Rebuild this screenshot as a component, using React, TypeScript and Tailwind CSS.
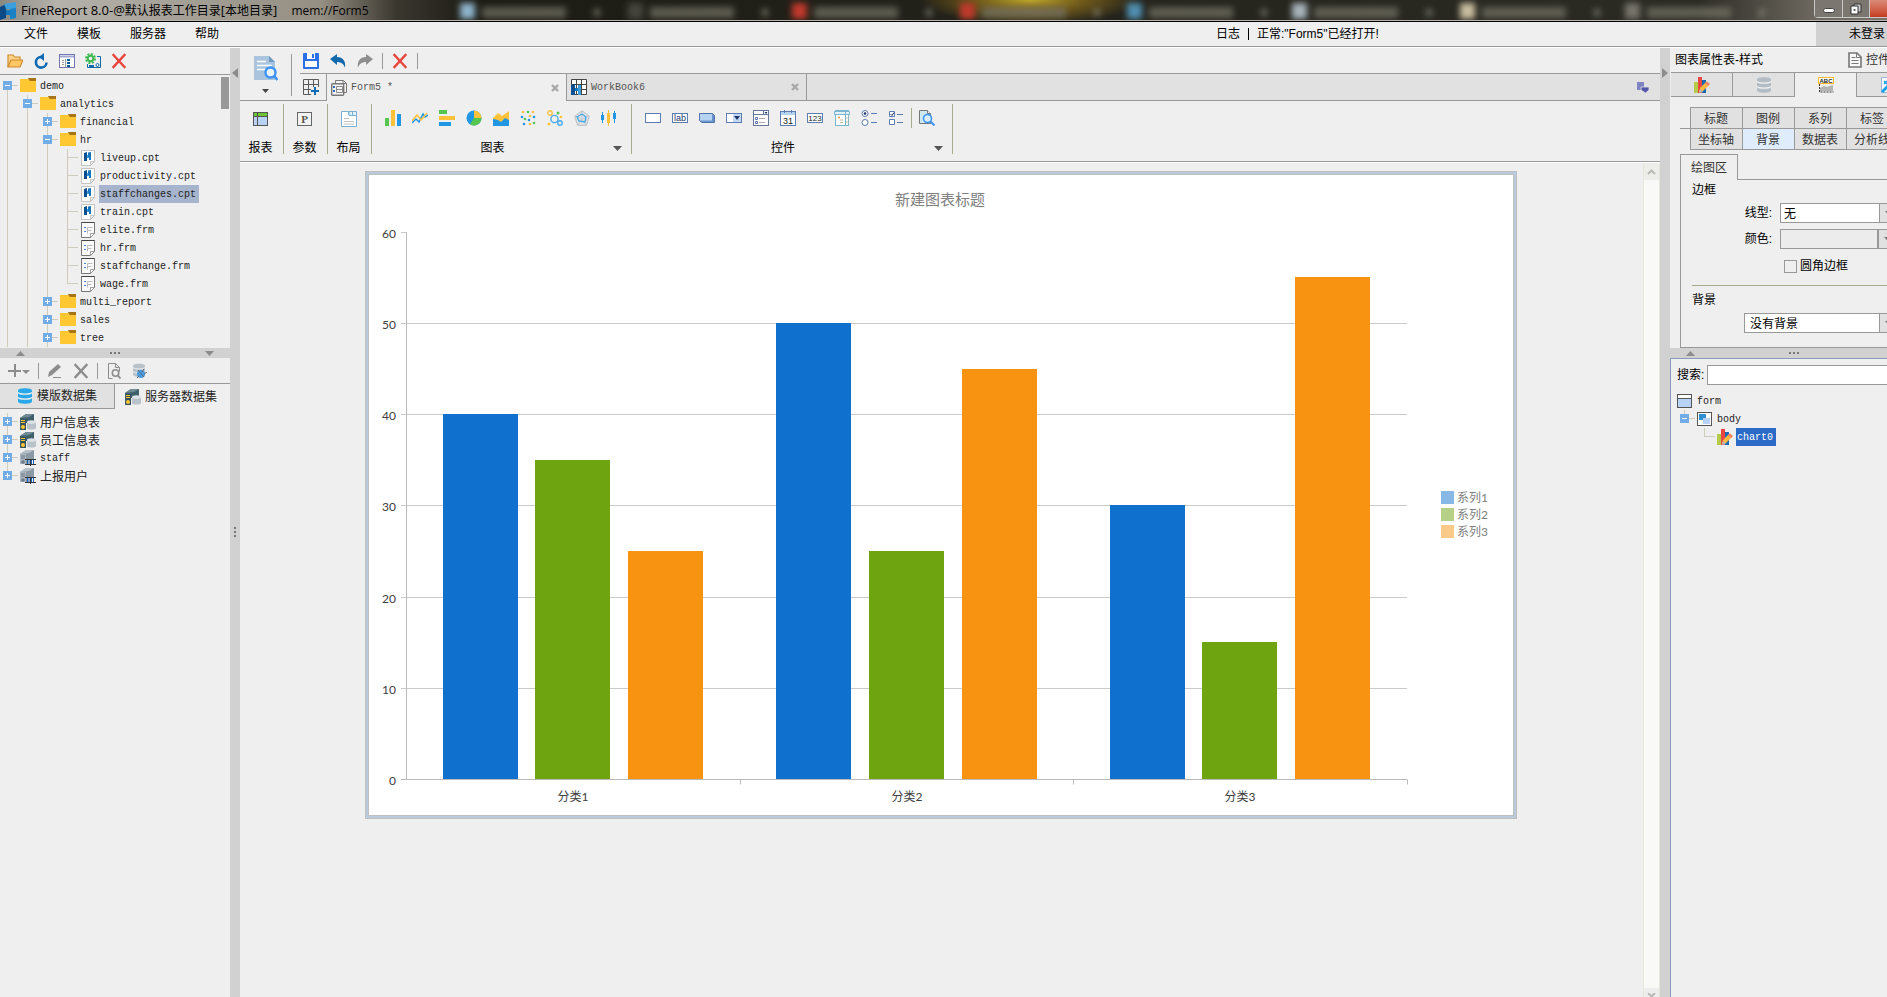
import { useState } from 'react';
import type { ReactNode } from 'react';

type Cell = 'line' | 'plus' | 'minus' | 'first' | 'last-plus' | 'last-minus' | 'branch' | 'end' | 'blank';

interface TreeItem {
  cells: Cell[];
  icon: ReactNode;
  label: string;
  cjk?: boolean;
}

function Icon({ children, w = 16, h = 16 }: { children: ReactNode; w?: number; h?: number }) {
  return (
    <svg width={w} height={h} viewBox={`0 0 ${w} ${h}`} className="shrink-0" aria-hidden="true">
      {children}
    </svg>
  );
}

/* ---------- tree icons ---------- */

const FolderIcon = () => (
  <Icon>
    <path d="M8 0h8v3H9z" fill="#a87418" />
    <path d="M0 1h8l2 2h6v11H0z" fill="#ffc833" />
  </Icon>
);

const CptIcon = () => (
  <Icon>
    <path d="M1.500 .5h13v11l-4 4h-9z" fill="#fff" stroke="#c4c4c4" />
    <path d="M10.500 15.500v-4h4z" fill="#e8e8e8" stroke="#bbb" strokeWidth=".8" />
    <path d="M4 3l3-1v9H4z" fill="#0a4f8f" />
    <path d="M7 5h2v3H7z" fill="#3ba0dd" />
    <path d="M8 2.500L11 2v8H9V7H8z" fill="#1577bd" />
  </Icon>
);

const FrmIcon = () => (
  <Icon>
    <path d="M1.500 .5h13v11l-4 4h-9z" fill="#fafafa" stroke="#777" />
    <path d="M1.500 .5h13" stroke="#444" />
    <path d="M10.500 15.500v-4h4z" fill="#fff" stroke="#888" strokeWidth=".8" />
    <path d="M4 5.500h2M4 9.500h2" stroke="#4a80d8" strokeWidth="1.200" />
    <path d="M7.500 11.500v-6h5M7.500 8.500h4" stroke="#bbb" fill="none" />
  </Icon>
);

const ServerIcon = () => (
  <Icon>
    <path d="M0 4l6-4h8v9H6v7H0z" fill="#3f5f6b" />
    <path d="M0 4l6-4h8l-5 3z" fill="#6f8c95" />
    <path d="M1 5h5v11H1z" fill="#35505b" />
    <path d="M1 6h4v1H1zM1 8h4v1H1z" fill="#ffc833" />
    <circle cx="3" cy="13" r="2" fill="#ffc833" />
    <path d="M7 8v6c0 2 9 2 9 0V8z" fill="#b9c1c9" />
    <ellipse cx="11.500" cy="8" rx="4.500" ry="1.800" fill="#dde2e7" />
  </Icon>
);

const ProcIcon = () => (
  <Icon>
    <path d="M0 4l6-4h8v14H0z" fill="#8b99a4" />
    <path d="M0 4l6-4h8l-5 3z" fill="#b8c2ca" />
    <path d="M0 4h6v10H0z" fill="#a9b5be" />
    <path d="M1 6h4M1 8h4" stroke="#6d7a85" />
    <circle cx="3" cy="12" r="1.800" fill="#6d7a85" />
    <path d="M7 10h7v5H7z" fill="#1a63b5" />
    <path d="M5 9.500h11M5 14.500h11M10.500 9v7" stroke="#333" />
    <path d="M9 10v4M12.500 10v4" stroke="#efefef" />
  </Icon>
);

const ChartPenIcon = () => (
  <Icon>
    <path d="M0 5h4v11H0z" fill="#b4cc4a" />
    <path d="M4 0h4v16H4z" fill="#ea4540" />
    <path d="M8 3h4v13H8z" fill="#1a68b0" />
    <path d="M5 15l1-4 6-6 3 3-6 6z" fill="#ffb942" />
    <path d="M11 6l2-1.500 3 2.500-2 2z" fill="#f08060" />
    <path d="M5 16l1-4 3 3z" fill="#b8b8b8" />
  </Icon>
);

const DbIcon = ({ fill }: { fill: string }) => (
  <Icon>
    <path d="M1 2.500C1-.5 15-.5 15 2.500v11c0 3-14 3-14 0z" fill={fill} />
    <path d="M1 4.500c2 2.200 12 2.200 14 0M1 9.500c2 2.200 12 2.200 14 0" stroke="#efefef" strokeWidth="1.200" fill="none" />
  </Icon>
);

/* ---------- toolbar icons ---------- */

const OpenIcon = () => (
  <Icon>
    <path d="M1 14V2h5l1.500 2H13v3" fill="#ffd48a" stroke="#d08a2c" strokeWidth="1.200" />
    <path d="M1 14l3-7h12l-3 7z" fill="#ffc766" stroke="#d08a2c" strokeWidth="1.200" />
  </Icon>
);

const RefreshIcon = () => (
  <Icon>
    <path d="M13.500 9.500A5.300 5.300 0 1 1 8 4" fill="none" stroke="#0d6ab4" strokeWidth="2.600" />
    <path d="M6 4L11 0v8z" fill="#0d6ab4" />
  </Icon>
);

const PanelIcon = () => (
  <Icon>
    <rect x=".5" y="1.500" width="15" height="13" fill="#fff" stroke="#7476b4" />
    <path d="M1 3.500h14" stroke="#a5a7d0" strokeWidth="2" />
    <path d="M3 7.500h2M3 9.500h2M3 11.500h2M6.500 6v8" stroke="#9a9a9a" />
    <path d="M8 6h3v2H8zM8 9h3v2H8zM8 12h3v2H8z" fill="#0d5c9c" />
  </Icon>
);

const GearPanelIcon = () => (
  <Icon>
    <path d="M12 3.500h3.500v11H2.500V11" fill="none" stroke="#0d6aa8" />
    <circle cx="5.500" cy="5.500" r="4.500" fill="none" stroke="#3fb950" strokeWidth="2" strokeDasharray="2 1.500" />
    <circle cx="5.500" cy="5.500" r="2.800" fill="none" stroke="#3fb950" strokeWidth="2" />
    <path d="M4 13h5" stroke="#0d6aa8" strokeWidth="2" />
    <circle cx="12.500" cy="12" r="1.500" fill="#fff" stroke="#0d6aa8" />
  </Icon>
);

const CrossIcon = ({ color }: { color: string }) => (
  <Icon>
    <path d="M2.500 2l11 12M13.500 2l-11 12" stroke={color} strokeWidth="2.400" strokeLinecap="square" />
  </Icon>
);

const SmallCross = () => (
  <Icon w={8} h={8}>
    <path d="M1 1l6 6M7 1L1 7" stroke="#a8a8a8" strokeWidth="2.400" />
  </Icon>
);

const Triangle = ({ color = '#555' }: { color?: string }) => (
  <Icon w={9} h={5}>
    <path d="M0 0h9L4.500 5z" fill={color} />
  </Icon>
);

const TriangleUp = () => (
  <Icon w={9} h={5}>
    <path d="M0 5h9L4.500 0z" fill="#8c8c8c" />
  </Icon>
);

const SaveIcon = () => (
  <Icon>
    <rect width="16" height="16" rx="1" fill="#2b6fe8" />
    <path d="M2 8h12v6H2z" fill="#fff" />
    <path d="M4 0h8v6H4z" fill="#fff" />
    <path d="M9 1h2v4H9z" fill="#2b6fe8" />
  </Icon>
);

const UndoIcon = () => (
  <Icon>
    <path d="M0 6l7-5v3c6 0 9 4 8 11-1-4-4-6-8-6v3z" fill="#0f69ac" />
  </Icon>
);

const RedoIcon = () => (
  <Icon>
    <path d="M16 6L9 1v3C3 4 0 8 1 15c1-4 4-6 8-6v3z" fill="#8e8e8e" />
  </Icon>
);

const PreviewIcon = () => (
  <Icon w={24} h={25}>
    <path d="M0 0h15l6 6v18H0z" fill="#a9c4dc" />
    <path d="M15 0v6h6z" fill="#6f9cc0" />
    <path d="M3 5.500h9M3 9.500h15M3 13.500h8" stroke="#fff" strokeWidth="1.400" />
    <circle cx="16.500" cy="16.500" r="5" fill="#eaf4ff" stroke="#3b94f5" strokeWidth="2.400" />
    <path d="M20 20l3.500 4" stroke="#3b94f5" strokeWidth="2.600" />
  </Icon>
);

const AddSheetIcon = () => (
  <Icon>
    <path d="M.5 .5h15v15H.5zM.5 5.500h15M.5 10.500h15M5.500 .5v15M10.500 .5v15" fill="none" stroke="#5a5a5a" />
    <path d="M8 8h8v8H8z" fill="#efefef" />
    <path d="M12 8v8M8 12h8" stroke="#0d6ab4" strokeWidth="2" />
  </Icon>
);

const FormTabIcon = () => (
  <Icon>
    <path d="M4.500 3V.5h8l3 3v9h-3" fill="#f4f4f4" stroke="#777" />
    <rect x=".7" y="3.700" width="12" height="11.500" rx="1" fill="#f4f4f4" stroke="#777" strokeWidth="1.400" />
    <path d="M12 .5v3h3.500" fill="none" stroke="#777" />
    <path d="M2 6h2v2H2zM2 10h2v2H2z" fill="#2f6bb0" />
    <path d="M5.500 6.500h6v6h-6zM5.500 9.500h6" fill="none" stroke="#8a8a8a" />
  </Icon>
);

const BookTabIcon = () => (
  <Icon>
    <path d="M.5 .5h15v15H.5zM.5 5.500h15M.5 10.500h15M5.500 .5v15M10.500 .5v15" fill="#fff" stroke="#444" />
    <path d="M0 6l4-1v11H0z" fill="#0a4f8f" />
    <path d="M4 9h3v3H4z" fill="#1577bd" />
    <path d="M7 6h3v10H7z" fill="#3ba0dd" />
  </Icon>
);

const PlusMenuIcon = () => (
  <Icon w={22} h={16}>
    <path d="M7 1v13M0 8h13" stroke="#8c8c8c" strokeWidth="2" />
    <path d="M14 7h8l-4 4z" fill="#8c8c8c" />
  </Icon>
);

const PencilIcon = () => (
  <Icon>
    <path d="M1 14l1-5 9-8 3 3-9 8z" fill="#8c8c8c" />
    <path d="M6 14.500h8" stroke="#8c8c8c" />
  </Icon>
);

const PageSearchIcon = () => (
  <Icon>
    <path d="M2.500 15.500V.5h7l4 4v4M9.500 .5v4h4M2.500 15.500h4" fill="none" stroke="#8c8c8c" />
    <circle cx="9.500" cy="10" r="3.200" fill="none" stroke="#8c8c8c" strokeWidth="1.600" />
    <path d="M12 12.500l2.500 3" stroke="#8c8c8c" strokeWidth="1.800" />
  </Icon>
);

const DbEditIcon = () => (
  <Icon>
    <path d="M1 2.500C1 0 13 0 13 2.500v9c0 3-12 3-12 0z" fill="#b9c1c9" />
    <path d="M1 4.500c2 2 10 2 12 0M1 8.500c2 2 10 2 12 0" stroke="#efefef" fill="none" />
    <circle cx="9" cy="11" r="4" fill="#4a9de0" />
    <path d="M6 7l6 7M12 6l-2 3M15 9l-3 2M5 15l2-2" stroke="#5e6b78" />
  </Icon>
);

/* ---------- ribbon icons ---------- */

const ReportIcon = () => (
  <Icon>
    <rect x=".5" y="1.500" width="14" height="13" fill="#b8d2f5" stroke="#555" />
    <path d="M1 2h13v3.500H1z" fill="#6cc431" />
    <path d="M.5 5.500h14M4.500 2v12" stroke="#555" />
  </Icon>
);

const ParamIcon = () => (
  <Icon>
    <rect x=".5" y="1.500" width="14" height="13" fill="#f2f2f2" stroke="#666" />
    <text x="7.500" y="12" textAnchor="middle" fontSize="11" fontWeight="bold" fill="#555" fontFamily="Liberation Serif, serif">
      P
    </text>
  </Icon>
);

const LayoutIcon = () => (
  <Icon>
    <path d="M.5 .5h7v3h8v12H.5z" fill="#fff" stroke="#7bb0d4" />
    <path d="M8 .5h7.500v4H8zM11.500 .5v4" fill="#e3f1fb" stroke="#7bb0d4" />
    <path d="M3 7.500h5M3 10.500h10M3 13h10" stroke="#c2c2c2" />
  </Icon>
);

const chartIcons: [string, ReactNode][] = [
  ['柱形图', <><path d="M0 8h4v8H0z" fill="#55c74f" /><path d="M6 0h4v16H6z" fill="#ffc23a" /><path d="M12 4h4v12h-4z" fill="#2196e3" /></>],
  ['折线图', <><path d="M0 13l4-4 3 3 4-8 2 3 3-2" fill="none" stroke="#2196e3" strokeWidth="1.500" /><path d="M0 11l5-6 4 5 6-7" fill="none" stroke="#ffc23a" strokeWidth="1.500" /></>],
  ['条形图', <><path d="M0 0h8v4H0z" fill="#55c74f" /><path d="M0 6h16v4H0z" fill="#ffc23a" /><path d="M0 12h12v4H0z" fill="#2196e3" /></>],
  ['饼图', <><circle cx="8" cy="8" r="7.500" fill="#2196e3" /><path d="M8 8V.5A7.500 7.500 0 0 1 15.500 8z" fill="#ffc23a" /><path d="M8 8h7.500A7.500 7.500 0 0 1 4 14.300z" fill="#55c74f" /></>],
  ['面积图', <><path d="M0 8l5-5 4 3 7-5v12H0z" fill="#ffc23a" /><path d="M0 9l5 1 3 2 4-4 4 2v6H0z" fill="#2196e3" /></>],
  ['散点图', <><g fill="#55c74f"><circle cx="8" cy="2" r="1.300" /><circle cx="5" cy="9" r="1.300" /><circle cx="14" cy="13" r="1.300" /></g><g fill="#ffc23a"><circle cx="3" cy="2" r="1.300" /><circle cx="13" cy="2" r="1.300" /><circle cx="10" cy="6" r="1.300" /><circle cx="10" cy="14" r="1.300" /></g><g fill="#2196e3"><circle cx="2" cy="7" r="1.300" /><circle cx="14" cy="7" r="1.300" /><circle cx="9" cy="10" r="1.300" /><circle cx="4" cy="14" r="1.300" /></g></>],
  ['气泡图', <><circle cx="3" cy="3" r="2.200" fill="none" stroke="#ffc23a" strokeWidth="1.400" /><circle cx="7.500" cy="9" r="3.600" fill="none" stroke="#4aaae8" strokeWidth="1.400" /><circle cx="13" cy="13" r="2.200" fill="none" stroke="#4aaae8" strokeWidth="1.400" /><circle cx="11" cy="3" r="1.500" fill="#55c74f" /><circle cx="14" cy="7" r="1.300" fill="#ffc23a" /><circle cx="2" cy="14" r="1.500" fill="#ffc23a" /></>],
  ['雷达图', <><path d="M8 .7l7.300 5.600-2.800 9h-9L.7 6.300z" fill="#e3e5e8" stroke="#b9bdc2" /><path d="M8 1v8M1 6l7 3 7-3M4 15l4-6 4 6" stroke="#b9bdc2" strokeWidth=".7" fill="none" /><path d="M8 4l4 3-1 5-6-1-2-4z" fill="none" stroke="#4aaae8" strokeWidth="1.400" /></>],
  ['股价图', <><path d="M1.500 2v11M13.500 1v12" stroke="#2196e3" /><path d="M0 5h3v5H0zM12 3h3v6h-3z" fill="#2196e3" /><path d="M7.500 0v16" stroke="#ffc23a" /><path d="M6 3h3v10H6z" fill="#ffc23a" /></>],
];

const widgetIcons: [string, ReactNode][] = [
  ['文本', <rect x=".5" y="3.500" width="15" height="9" fill="#fff" stroke="#5c7cb4" />],
  ['标签', <><rect x=".5" y="3.500" width="15" height="9" fill="#fff" stroke="#5c7cb4" /><text x="8" y="11" textAnchor="middle" fontSize="9" fill="#1d3470" fontFamily="Liberation Sans, sans-serif">lab</text></>],
  ['按钮', <><path d="M.5 3.500h13l2 2v7H3l-2.500-2z" fill="#6a93cc" stroke="#4f74ad" /><path d="M1 4h12v6.500H1z" fill="#b7d3f2" /></>],
  ['下拉框', <><rect x=".5" y="3.500" width="15" height="9" fill="#fff" stroke="#5c7cb4" /><path d="M7 4h8v8H7z" fill="#c3d8f5" /><path d="M8 6h6l-3 4z" fill="#1d3470" /></>],
  ['复选下拉', <><rect x=".5" y=".5" width="15" height="15" fill="#fff" stroke="#667999" /><path d="M.5 4.500h15M10.500 .5v4" stroke="#667999" /><path d="M11.500 2h3L13 4z" fill="#1d3470" /><path d="M2.500 7.500h2v2h-2zM2.500 11.500h2v2h-2z" fill="none" stroke="#5c7cb4" /><path d="M6 8.500h6M6 12.500h6" stroke="#aaa" /></>],
  ['日期', <><rect x=".5" y="1.500" width="15" height="14" fill="#fff" stroke="#5c7cb4" /><path d="M1 2h14v3H1z" fill="#b7d3f2" /><path d="M4.500 0v3M11.500 0v3" stroke="#5c7cb4" /><text x="8" y="14" textAnchor="middle" fontSize="9" fill="#222" fontFamily="Liberation Sans, sans-serif">31</text></>],
  ['数字', <><rect x=".5" y="3.500" width="15" height="9" fill="#fff" stroke="#5c7cb4" /><text x="8" y="11" textAnchor="middle" fontSize="8" fill="#222" fontFamily="Liberation Sans, sans-serif">123</text></>],
  ['树', <><rect x="1.500" y=".5" width="13" height="15" fill="#fff" stroke="#7bb5cf" /><path d="M.5 1.500h15v3H.5zM11.500 1.500v14" fill="#e3f1fb" stroke="#7bb5cf" /><path d="M4 7.500h2" stroke="#f08c2e" strokeWidth="1.600" /><path d="M6 10h3M6 12.500h3M12 8h3M12 12h3" stroke="#c9b892" /></>],
  ['单选', <><circle cx="4" cy="3.500" r="3" fill="#fff" stroke="#5c7cb4" /><circle cx="4" cy="3.500" r="1.300" fill="#1d3470" /><circle cx="4" cy="12.500" r="3" fill="#fff" stroke="#5c7cb4" /><path d="M10 3.500h6M10 12.500h6" stroke="#5c7cb4" /></>],
  ['多选', <><path d="M1.500 1.500h5v5h-5zM1.500 9.500h5v5h-5z" fill="#fff" stroke="#5c7cb4" /><path d="M2.500 4l1.500 1.500L6 2.500" fill="none" stroke="#1d3470" /><path d="M9 4.500h6M9 12.500h6" stroke="#5c7cb4" /></>],
];

const FindIcon = () => (
  <Icon>
    <path d="M.5 .5h8l3 3v10H.5z" fill="#cfe9f2" stroke="#777" />
    <path d="M8.500 .5v3h3" fill="#fff" stroke="#777" />
    <circle cx="8.500" cy="8.500" r="4" fill="#d8eefc" stroke="#3b94f5" strokeWidth="1.600" />
    <path d="M11.500 11.500l4 4" stroke="#3b94f5" strokeWidth="2" />
  </Icon>
);

const AbcChartIcon = () => (
  <Icon>
    <rect x=".5" y=".5" width="15" height="6" fill="#fff" stroke="#ffb92e" />
    <text x="8" y="6" textAnchor="middle" fontSize="6" fontWeight="bold" fill="#222" fontFamily="Liberation Sans, sans-serif">
      ABC
    </text>
    <path d="M2 14v-3l4-2 3 1 6-2v6z" fill="#b3b3b3" />
    <path d="M1.500 7v8h14" fill="none" stroke="#333" strokeDasharray="2 1" />
  </Icon>
);

const WandIcon = () => (
  <Icon>
    <rect x=".5" y=".5" width="15" height="15" fill="#f6faff" stroke="#9cb8d4" />
    <path d="M1 15L12 4" stroke="#15a0ea" strokeWidth="3" />
    <path d="M3 4l3 3M6 4L3 7" stroke="#15a0ea" strokeWidth="1.500" />
  </Icon>
);

/* ---------- tree ---------- */

function TreeCell({ kind }: { kind: Cell }) {
  const plus = kind === 'plus' || kind === 'last-plus';
  const box = plus || kind === 'minus' || kind === 'first' || kind === 'last-minus';
  const up = kind !== 'blank' && kind !== 'first';
  const down = kind !== 'blank' && kind !== 'end' && kind !== 'last-plus' && kind !== 'last-minus';
  return (
    <Icon w={20} h={18}>
      {up && <path d="M7.500 0v9" stroke="#cfccbe" />}
      {down && <path d="M7.500 9v9" stroke="#cfccbe" />}
      {(box || kind === 'branch' || kind === 'end') && <path d="M7 8.500h11" stroke="#cfccbe" />}
      {box && <path d="M3 4h9v9H3z" fill="#72ace6" />}
      {box && <path d={plus ? 'M5 8.500h5M7.500 6v5' : 'M5 8.500h5'} stroke="#fff" />}
    </Icon>
  );
}

function Tree({ items, selected, onSelect, selectedClass }: {
  items: TreeItem[];
  selected: string;
  onSelect: (label: string) => void;
  selectedClass: string;
}) {
  return (
    <ul role="tree">
      {items.map((item) => (
        <li key={item.label} role="treeitem" aria-selected={item.label === selected} className="flex h-[18px] items-center">
          {item.cells.map((c, i) => (
            <TreeCell key={i} kind={c} />
          ))}
          {item.icon}
          <button
            onClick={() => onSelect(item.label)}
            className={`ml-[3px] h-[18px] pr-[3px] pl-px leading-5 whitespace-nowrap ${
              item.cjk ? 'text-[12px]' : "font-['Liberation_Mono',monospace] text-[10px]"
            } ${item.label === selected ? selectedClass : 'text-[#222]'}`}
          >
            {item.label}
          </button>
        </li>
      ))}
    </ul>
  );
}

const fileTree: TreeItem[] = [
  { cells: ['first'], icon: <FolderIcon />, label: 'demo' },
  { cells: ['line', 'minus'], icon: <FolderIcon />, label: 'analytics' },
  { cells: ['line', 'line', 'plus'], icon: <FolderIcon />, label: 'financial' },
  { cells: ['line', 'line', 'minus'], icon: <FolderIcon />, label: 'hr' },
  { cells: ['line', 'line', 'line', 'branch'], icon: <CptIcon />, label: 'liveup.cpt' },
  { cells: ['line', 'line', 'line', 'branch'], icon: <CptIcon />, label: 'productivity.cpt' },
  { cells: ['line', 'line', 'line', 'branch'], icon: <CptIcon />, label: 'staffchanges.cpt' },
  { cells: ['line', 'line', 'line', 'branch'], icon: <CptIcon />, label: 'train.cpt' },
  { cells: ['line', 'line', 'line', 'branch'], icon: <FrmIcon />, label: 'elite.frm' },
  { cells: ['line', 'line', 'line', 'branch'], icon: <FrmIcon />, label: 'hr.frm' },
  { cells: ['line', 'line', 'line', 'branch'], icon: <FrmIcon />, label: 'staffchange.frm' },
  { cells: ['line', 'line', 'line', 'end'], icon: <FrmIcon />, label: 'wage.frm' },
  { cells: ['line', 'line', 'plus'], icon: <FolderIcon />, label: 'multi_report' },
  { cells: ['line', 'line', 'plus'], icon: <FolderIcon />, label: 'sales' },
  { cells: ['line', 'line', 'plus'], icon: <FolderIcon />, label: 'tree' },
];

const dataTree: TreeItem[] = [
  { cells: ['plus'], icon: <ServerIcon />, label: '用户信息表', cjk: true },
  { cells: ['plus'], icon: <ServerIcon />, label: '员工信息表', cjk: true },
  { cells: ['plus'], icon: <ProcIcon />, label: 'staff' },
  { cells: ['last-plus'], icon: <ProcIcon />, label: '上报用户', cjk: true },
];

const formTree: TreeItem[] = [
  {
    cells: [],
    icon: (
      <Icon>
        <rect x=".5" y="1.500" width="14" height="13" fill="#b8d2f5" stroke="#555" />
        <path d="M1 2h13v3H1z" fill="#fff" />
        <path d="M.5 5.500h14" stroke="#555" />
      </Icon>
    ),
    label: 'form',
  },
  {
    cells: ['last-minus'],
    icon: (
      <Icon>
        <rect x=".5" y="1.500" width="14" height="13" fill="#fff" stroke="#555" />
        <path d="M2 3h7v6H2z" fill="#2f8fd0" />
        <path d="M6 7h7v6H6z" fill="#b8d2f5" />
      </Icon>
    ),
    label: 'body',
  },
  { cells: ['blank', 'end'], icon: <ChartPenIcon />, label: 'chart0' },
];

/* ---------- chart ---------- */

const series = [
  { name: '系列1', color: '#0f71cd', light: '#87b8e6', values: [40, 50, 30] },
  { name: '系列2', color: '#6da40f', light: '#b6d187', values: [35, 25, 15] },
  { name: '系列3', color: '#f79311', light: '#fbc988', values: [25, 45, 55] },
];
const categories = ['分类1', '分类2', '分类3'];

function BarChart() {
  const left = 37.5;
  const right = 1038;
  const base = 604.5;
  const unit = 9.12;
  const step = (right - left) / categories.length;
  return (
    <svg viewBox="0 0 1144 640" className="block h-full w-full bg-white font-['Lato','Noto_Sans_CJK_SC',sans-serif]">
      <text x="571" y="30" textAnchor="middle" fontSize="15" fill="#808080">
        新建图表标题
      </text>
      {[0, 10, 20, 30, 40, 50, 60].map((v) => {
        const y = Math.floor(base - v * unit) + 0.5;
        return (
          <g key={v}>
            <path d={`M32 ${y}H${v === 60 ? left : right}`} stroke={v ? '#cacaca' : '#bababa'} />
            <text x="27" y={y + 5} textAnchor="end" fontSize="12" fill="#404040">
              {v}
            </text>
          </g>
        );
      })}
      {series.map((s, i) =>
        s.values.map((v, j) => (
          <rect
            key={`${i}-${j}`}
            x={Math.round(left + j * step + 36 + i * 92.8)}
            y={Math.floor(base - v * unit)}
            width="75"
            height={604 - Math.floor(base - v * unit)}
            fill={s.color}
          />
        )),
      )}
      <path d={`M${left} 57V${base}`} stroke="#bababa" />
      {categories.map((c, i) => (
        <g key={c}>
          <path d={`M${Math.floor(left + (i + 1) * step) + 0.5} ${base}v5`} stroke="#bababa" />
          <text x={Math.round(left + (i + 0.5) * step)} y="626" textAnchor="middle" fontSize="12" fill="#404040">
            {c}
          </text>
        </g>
      ))}
      {series.map((s, i) => (
        <g key={s.name}>
          <rect x="1072" y={316 + i * 17} width="13" height="13" fill={s.light} />
          <text x="1088" y={327 + i * 17} fontSize="12" fill="#808080">
            {s.name}
          </text>
        </g>
      ))}
    </svg>
  );
}

/* ---------- shell ---------- */

const ghostTabs = [
  { x: 460, color: '#8fb4cc' },
  { x: 628, color: '#44443c' },
  { x: 792, color: '#c0392b' },
  { x: 960, color: '#c0392b' },
  { x: 1127, color: '#4f8fb0' },
  { x: 1292, color: '#a8b4bc' },
  { x: 1460, color: '#c9bea0' },
  { x: 1625, color: '#77756a' },
];

function TitleBar() {
  return (
    <header className="relative flex h-[22px] shrink-0 items-center overflow-hidden border-b border-black bg-[#1d1c14]">
      <svg className="absolute inset-0 h-full w-full" aria-hidden="true">
        <defs>
          <linearGradient id="glass">
            <stop offset="0" stopColor="#8b8882" />
            <stop offset=".03" stopColor="#b5b2ab" />
            <stop offset=".1" stopColor="#a39f95" />
            <stop offset=".17" stopColor="#958f83" />
            <stop offset=".21" stopColor="#3a372f" />
            <stop offset=".25" stopColor="#1d1c14" />
            <stop offset=".9" stopColor="#2b2a23" />
            <stop offset=".96" stopColor="#6b675e" />
            <stop offset="1" stopColor="#77736a" />
          </linearGradient>
          <radialGradient id="glow">
            <stop offset="0" stopColor="#c4ac2a" />
            <stop offset=".5" stopColor="#80651a" stopOpacity=".8" />
            <stop offset="1" stopColor="#80651a" stopOpacity="0" />
          </radialGradient>
          <filter id="soft" x="-20%" y="-100%" width="140%" height="300%">
            <feGaussianBlur stdDeviation="3" />
          </filter>
        </defs>
        <rect width="100%" height="22" fill="url(#glass)" />
        <ellipse cx="1030" cy="-1" rx="110" ry="26" fill="url(#glow)" />
        <g filter="url(#soft)">
          {ghostTabs.map((t) => (
            <g key={t.x}>
              <rect x={t.x} y="3" width="15" height="16" fill={t.color} />
              <rect x={t.x + 22} y="7" width="84" height="11" fill="#77756a" opacity=".7" />
              <rect x={t.x + 134} y="9" width="6" height="7" fill="#8f8d80" opacity=".7" />
            </g>
          ))}
        </g>
        <path d="M0 20.500h4000" stroke="#b9b5ae" />
      </svg>
      <div className="relative flex items-center gap-[5px]">
        <Icon w={16} h={18}>
          <path d="M0 5l6-3v14l-6 2z" fill="#0a4a86" />
          <path d="M6 8h4v5H6z" fill="#1577bd" />
          <path d="M4 2L16 0v16l-6 1V7H6z" fill="#3ba0dd" />
          <path d="M10 7l6-1v10l-6 1z" fill="#1b82c8" />
        </Icon>
        <h1 className="font-['Open_Sans','Noto_Sans_CJK_SC',sans-serif] text-[13px] leading-5 whitespace-pre text-black">
          {'FineReport 8.0-@'}
          <span className="text-[12px]">默认报表工作目录</span>[<span className="text-[12px]">本地目录</span>]
          <span className="ml-3.5 text-[12px]">mem://Form5</span>
        </h1>
      </div>
      <div className="relative ml-auto flex self-start rounded-bl border-b border-l border-[#c8c8c8]">
        <button aria-label="最小化" className="flex h-[17px] w-7 items-center justify-center border-r border-[#c8c8c8] bg-[#7b7770]">
          <span className="mt-1 h-[5px] w-3 rounded-sm border border-[#444] bg-white" />
        </button>
        <button aria-label="还原" className="flex h-[17px] w-[27px] items-center justify-center border-r border-[#c8c8c8] bg-[#7b7770]">
          <Icon w={12} h={12}>
            <path d="M4 1h7v8H4z" fill="#ccc" stroke="#333" />
            <path d="M1 3h7v8H1z" fill="#fff" stroke="#333" />
            <path d="M3.500 6h2v2h-2z" fill="#666" />
          </Icon>
        </button>
        <button aria-label="关闭" className="h-[17px] w-[17px] bg-linear-to-b from-[#d98a78] to-[#c63a1d]" />
      </div>
    </header>
  );
}

function IconButton({ label, children }: { label: string; children: ReactNode }) {
  return (
    <button aria-label={label} title={label} className="flex shrink-0 items-center justify-center">
      {children}
    </button>
  );
}

function HSplitter({ both }: { both?: boolean }) {
  return (
    <div className="flex h-[10px] shrink-0 items-center justify-between bg-[#d1d1d1] px-4">
      <TriangleUp />
      <Icon w={10} h={2}>
        <path d="M0 0h2v2H0zM4 0h2v2H4zM8 0h2v2H8z" fill="#777" />
      </Icon>
      {both ? <Triangle color="#8c8c8c" /> : <span className="w-[11px]" />}
    </div>
  );
}

function LeftPanel() {
  const [file, setFile] = useState('staffchanges.cpt');
  const [dataset, setDataset] = useState('');
  return (
    <aside className="flex w-[230px] shrink-0 flex-col">
      <div className="flex h-[27px] items-center gap-[10px] border-b border-[#999] pl-[7px]">
        <IconButton label="打开"><OpenIcon /></IconButton>
        <IconButton label="刷新"><RefreshIcon /></IconButton>
        <IconButton label="目录"><PanelIcon /></IconButton>
        <IconButton label="设置"><GearPanelIcon /></IconButton>
        <IconButton label="删除"><CrossIcon color="#e8453c" /></IconButton>
      </div>
      <div className="flex h-[273px] shrink-0 justify-between overflow-hidden pt-0.5">
        <Tree items={fileTree} selected={file} onSelect={setFile} selectedClass="bg-[#a6b4cd] text-[#222]" />
        <div className="mr-px h-8 w-2 bg-[#999]" />
      </div>
      <HSplitter both />
      <div className="flex h-[26px] shrink-0 items-center border-b border-[#999] pl-2">
        <IconButton label="新建数据集"><PlusMenuIcon /></IconButton>
        <span className="mx-2 h-4 w-px bg-[#999]" />
        <div className="flex gap-[10px]">
          <IconButton label="编辑"><PencilIcon /></IconButton>
          <IconButton label="移除"><CrossIcon color="#8c8c8c" /></IconButton>
        </div>
        <span className="mx-2 h-4 w-px bg-[#999]" />
        <div className="flex gap-[10px]">
          <IconButton label="预览"><PageSearchIcon /></IconButton>
          <IconButton label="连接"><DbEditIcon /></IconButton>
        </div>
      </div>
      <div role="tablist" className="flex h-[25px] shrink-0 text-[12px] leading-[22px] text-[#222]">
        <button role="tab" aria-selected="false" className="flex w-[115px] items-center justify-center gap-1 border-r border-b border-[#999] bg-[#e1e1e1]">
          <DbIcon fill="#28a8ea" />
          模版数据集
        </button>
        <button role="tab" aria-selected="true" className="flex flex-1 items-center gap-1 pl-[10px]">
          <ServerIcon />
          服务器数据集
        </button>
      </div>
      <div className="pt-1">
        <Tree items={dataTree} selected={dataset} onSelect={setDataset} selectedClass="bg-[#a6b4cd] text-[#222]" />
      </div>
    </aside>
  );
}

function VSplitter({ dir }: { dir: 'left' | 'right' }) {
  return (
    <div className="flex w-[10px] shrink-0 flex-col items-center bg-[#d1d1d1] pt-5">
      <Icon w={6} h={10}>
        <path d={dir === 'left' ? 'M6 0v10L0 5z' : 'M0 0v10l6-5z'} fill="#8c8c8c" />
      </Icon>
      {dir === 'left' && (
        <div className="flex flex-1 items-center pb-3">
          <Icon w={2} h={10}>
            <path d="M0 0h2v2H0zM0 4h2v2H0zM0 8h2v2H0z" fill="#777" />
          </Icon>
        </div>
      )}
    </div>
  );
}

function RibbonGroup({ title, icon }: { title: string; icon: ReactNode }) {
  return (
    <button className="flex w-11 flex-col items-center justify-between border-r border-[#a9a98f] pt-[7px] pr-0.5 text-[12px] leading-3 text-black">
      {icon}
      {title}
    </button>
  );
}

function Ribbon() {
  return (
    <div className="flex h-[61px] shrink-0 border-b border-[#999] pt-[3px] pb-[7px]">
      <RibbonGroup title="报表" icon={<ReportIcon />} />
      <RibbonGroup title="参数" icon={<ParamIcon />} />
      <RibbonGroup title="布局" icon={<LayoutIcon />} />
      <div className="flex w-[260px] flex-col justify-between border-r border-[#a9a98f] pt-1">
        <div className="flex h-5 items-center gap-[11px] pl-[13px]">
          {chartIcons.map(([name, icon]) => (
            <IconButton key={name} label={name}>
              <Icon>{icon}</Icon>
            </IconButton>
          ))}
        </div>
        <div className="flex items-center pr-[9px] text-[12px] leading-3 text-black">
          <span className="flex-1 text-center">图表</span>
          <IconButton label="更多图表"><Triangle /></IconButton>
        </div>
      </div>
      <div className="flex w-[321px] flex-col justify-between border-r border-[#a9a98f] pt-1">
        <div className="flex h-5 items-center gap-[11px] pl-[13px]">
          {widgetIcons.map(([name, icon]) => (
            <IconButton key={name} label={name}>
              <Icon>{icon}</Icon>
            </IconButton>
          ))}
          <span className="-mr-1 -ml-1 h-5 w-px bg-[#a9a98f]" />
          <IconButton label="查找控件"><FindIcon /></IconButton>
        </div>
        <div className="flex items-center pr-[9px] text-[12px] leading-3 text-black">
          <span className="flex-1 text-center">控件</span>
          <IconButton label="更多控件"><Triangle /></IconButton>
        </div>
      </div>
    </div>
  );
}

function MainPanel() {
  return (
    <main className="flex min-w-0 flex-1 flex-col">
      <div className="flex h-[53px] shrink-0">
        <div className="flex w-[60px] shrink-0 border-b border-[#999]">
          <button aria-label="预览" className="flex w-[51px] flex-col items-center gap-2 pt-2">
            <PreviewIcon />
            <Icon w={7} h={4}>
              <path d="M0 0h7L3.500 4z" fill="#444" />
            </Icon>
          </button>
          <span className="mt-1.5 h-[42px] w-px bg-[#999]" />
        </div>
        <div className="flex min-w-0 flex-1 flex-col">
          <div className="flex h-[26px] items-center border-b border-[#999] pl-[3px]">
            <div className="flex gap-[11px]">
              <IconButton label="保存"><SaveIcon /></IconButton>
              <IconButton label="撤销"><UndoIcon /></IconButton>
              <IconButton label="重做"><RedoIcon /></IconButton>
            </div>
            <span className="mx-[9px] h-4 w-px bg-[#999]" />
            <IconButton label="关闭模板"><CrossIcon color="#e8453c" /></IconButton>
            <span className="mx-[9px] h-4 w-px bg-[#999]" />
          </div>
          <div role="tablist" className="flex h-[27px] bg-[#e1e1e1] font-['Liberation_Mono',monospace] text-[10px] text-[#555]">
            <div className="flex w-[27px] items-center border-r border-b border-[#999] bg-[#efefef] pl-[3px]">
              <IconButton label="新建表单"><AddSheetIcon /></IconButton>
            </div>
            <div className="flex w-[239px] items-center gap-1 bg-[#efefef] pr-[7px] pl-1">
              <FormTabIcon />
              <button role="tab" aria-selected="true" className="flex-1 text-left">Form5 *</button>
              <IconButton label="关闭 Form5"><SmallCross /></IconButton>
            </div>
            <div className="flex w-[241px] items-center gap-1 border-x border-b border-[#999] pr-[7px] pl-1">
              <BookTabIcon />
              <button role="tab" aria-selected="false" className="flex-1 text-left">WorkBook6</button>
              <IconButton label="关闭 WorkBook6"><SmallCross /></IconButton>
            </div>
            <div className="flex flex-1 items-center justify-end border-b border-[#999] pr-[11px]">
              <IconButton label="模板列表">
                <Icon w={12} h={11}>
                  <path d="M0 0h7v8H0z" fill="#8083c2" />
                  <path d="M4 5h8v3l-3.500 3L4 8z" fill="#5356a8" stroke="#e1e1e1" strokeWidth=".8" />
                </Icon>
              </IconButton>
            </div>
          </div>
        </div>
      </div>
      <Ribbon />
      <div className="flex min-h-0 flex-1 border-t border-white">
        <div className="min-w-0 flex-1 overflow-hidden pt-2 pr-[126px] pl-[125px]">
          <div className="aspect-video border border-[#bfbfbf]">
            <div className="h-full border-2 border-[#b8cadb]">
              <div className="h-full border border-[#bfbfbf]">
                <BarChart />
              </div>
            </div>
          </div>
        </div>
        <div className="flex w-[17px] shrink-0 flex-col border-x border-[#e6e6dc] bg-[#f9f9f7]">
          <button aria-label="向上滚动" className="flex h-[17px] items-center justify-center bg-[#ededea]">
            <Icon w={9} h={6}>
              <path d="M1 5l3.500-3.500L8 5" fill="none" stroke="#b8b8b4" strokeWidth="2" />
            </Icon>
          </button>
          <span className="flex-1" />
          <button aria-label="向下滚动" className="flex h-[9px] items-end justify-center bg-[#ededed]">
            <Icon w={9} h={4}>
              <path d="M1 0l3.500 3.500L8 0" fill="none" stroke="#b8b8b4" strokeWidth="2" />
            </Icon>
          </button>
        </div>
      </div>
    </main>
  );
}

const styleTabs = ['标题', '图例', '系列', '标签', '坐标轴', '背景', '数据表', '分析线'];

function StyleForm() {
  return (
    <div className="flex flex-1 flex-col border-b border-l border-[#999] text-[12px] leading-5 text-black">
      <h3 className="pl-[11px]">边框</h3>
      <div className="mt-[3px] flex h-5 items-center">
        <label htmlFor="line" className="w-[99px] pr-2 text-right">线型:</label>
        <div className="flex h-5 border border-[#999] bg-white">
          <select id="line" className="w-[98px] appearance-none pl-[3px] outline-none">
            <option>无</option>
          </select>
          <span className="flex w-5 items-center justify-center border-l border-[#999] bg-[#e1e1e1]"><Triangle color="#777" /></span>
        </div>
      </div>
      <div className="mt-1.5 flex h-5 items-center">
        <label htmlFor="color" className="w-[99px] pr-2 text-right">颜色:</label>
        <button id="color" className="flex h-5 border border-[#999] bg-[#ececec]">
          <span className="w-[96px]" />
          <span className="flex h-full w-5 items-center justify-center border-l-2 border-[#999] bg-[#e1e1e1]"><Triangle color="#777" /></span>
        </button>
      </div>
      <label className="mt-[7px] flex items-center gap-[3px] pl-[103px]">
        <input type="checkbox" className="h-[13px] w-[13px] appearance-none border border-[#999] bg-[#efefef]" />
        圆角边框
      </label>
      <hr className="mt-[9px] ml-[11px] border-[#a9a98f]" />
      <h3 id="bg" className="mt-1 pl-[11px]">背景</h3>
      <div className="mt-[3px] ml-[63px] flex h-5 border border-[#999] bg-white">
        <select aria-labelledby="bg" className="w-[134px] shrink-0 appearance-none pl-[5px] outline-none">
          <option>没有背景</option>
        </select>
        <span className="flex w-5 shrink-0 items-center justify-center border-l border-[#999] bg-[#e1e1e1]"><Triangle color="#777" /></span>
      </div>
    </div>
  );
}

function RightPanel() {
  const [tab, setTab] = useState('背景');
  const [node, setNode] = useState('chart0');
  return (
    <aside className="flex w-[217px] shrink-0 flex-col overflow-hidden">
      <div className="flex h-[300px] w-[250px] shrink-0 flex-col pl-px">
        <div className="flex h-[25px] shrink-0 items-center border-b border-[#999] pl-1 text-[12px] whitespace-nowrap text-black">
          <h2 className="w-[173px]">图表属性表-样式</h2>
          <button className="flex items-center gap-1 text-[#333]">
            <Icon w={14} h={16}>
              <path d="M1 1h8l4 4v10H1z" fill="#f6f6f6" stroke="#777" strokeWidth="1.600" />
              <path d="M8.500 1v4.500H13M3.500 5.500h4M3.500 8.500h7M3.500 11.500h7" fill="none" stroke="#777" />
            </Icon>
            控件
          </button>
        </div>
        <div role="tablist" className="flex h-6 shrink-0 bg-[#e1e1e1]">
          <button role="tab" aria-label="类型" className="flex w-[62px] items-center justify-center border-r border-b border-[#999]"><ChartPenIcon /></button>
          <button role="tab" aria-label="数据" className="flex w-[62px] items-center justify-center border-r border-b border-[#999]"><DbIcon fill="#b4bcc3" /></button>
          <button role="tab" aria-label="样式" aria-selected="true" className="flex w-[62px] items-center justify-center border-r border-[#999] bg-[#efefef]"><AbcChartIcon /></button>
          <button role="tab" aria-label="特效" className="flex flex-1 items-center justify-center border-b border-[#999]"><WandIcon /></button>
        </div>
        <div className="mt-[10px] flex h-[43px] shrink-0">
          <span className="ml-[9px] h-[22px] w-[10px] border-b border-[#999]" />
          <div className="grid w-[209px] shrink-0 grid-cols-4 border-t border-l border-[#999]">
            {styleTabs.map((t) => (
              <button
                key={t}
                onClick={() => setTab(t)}
                className={`border-r border-b border-[#999] pt-0.5 pr-px text-[12px] whitespace-nowrap text-[#333] ${t === tab ? 'bg-[#dfecfc]' : 'bg-[#e1e1e1]'}`}
              >
                {t}
              </button>
            ))}
          </div>
        </div>
        <div className="mt-1 ml-[9px] flex min-h-0 flex-1 flex-col">
          <div className="flex h-[26px] shrink-0">
            <button className="w-[58px] border-x border-t border-[#999] text-[12px] text-[#333]">绘图区</button>
            <span className="flex-1 border-b border-[#999]" />
          </div>
          <StyleForm />
        </div>
      </div>
      <div className="w-[250px]"><HSplitter /></div>
      <div className="flex-1 border-t border-l border-[#8b9bbb] pt-1.5">
        <div className="flex h-5 w-[250px] items-center pl-1.5 text-[12px] leading-[22px] text-black">
          <label htmlFor="search" className="w-[30px] whitespace-nowrap">搜索:</label>
          <input id="search" className="h-5 flex-1 border border-[#999] bg-white px-1 outline-none" />
        </div>
        <div className="pt-[7px] pl-1.5">
          <Tree items={formTree} selected={node} onSelect={setNode} selectedClass="bg-[#2b6bc7] text-white" />
        </div>
      </div>
    </aside>
  );
}

export default function App() {
  return (
    <div className="flex h-screen flex-col overflow-hidden bg-[#efefef] font-['Liberation_Sans','Noto_Sans_CJK_SC',sans-serif]">
      <TitleBar />
      <nav className="flex h-[25px] shrink-0 items-center border-b border-[#999] text-[12px] text-black">
        <div className="flex flex-1 gap-[29px] pl-6">
          <button>文件</button>
          <button>模板</button>
          <button>服务器</button>
          <button>帮助</button>
        </div>
        <div className="flex w-[600px] items-center gap-2">
          <button>日志</button>
          <span className="h-3 w-px bg-black" />
          <span>正常:"Form5"已经打开!</span>
        </div>
        <button className="h-full w-[71px] bg-[#d1d1d1] pr-0.5 text-right">未登录</button>
      </nav>
      <div className="flex min-h-0 flex-1 border-t border-white">
        <LeftPanel />
        <VSplitter dir="left" />
        <MainPanel />
        <VSplitter dir="right" />
        <RightPanel />
      </div>
    </div>
  );
}
